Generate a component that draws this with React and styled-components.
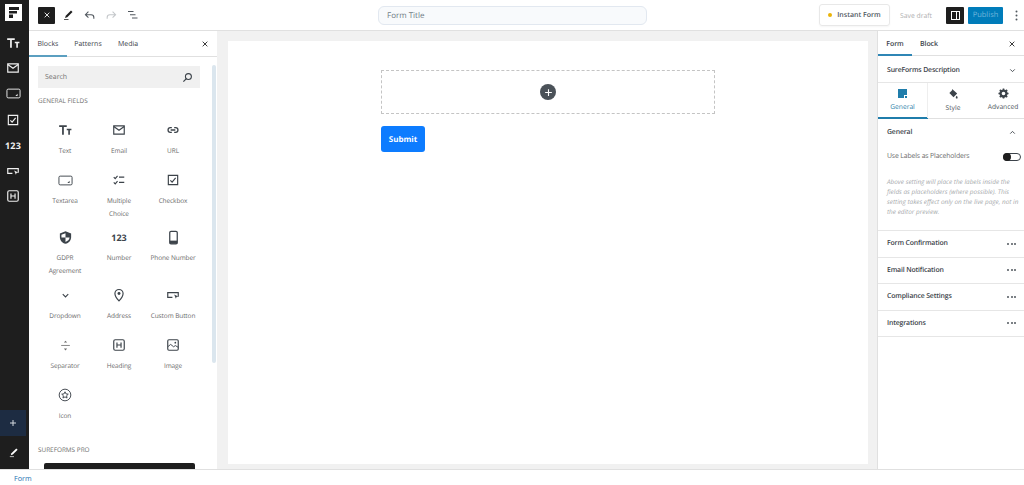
import React from 'react'
import styled, { createGlobalStyle } from 'styled-components'

const Global = createGlobalStyle`
  html, body { margin: 0; padding: 0; background: #fff; }
  body { font-family: "Open Sans", "Noto Sans", sans-serif; color: #1e1e1e; text-rendering: geometricPrecision; }
  * { box-sizing: border-box; }
`

const Page = styled.div`
  width: 1024px;
  height: 485px;
  display: flex;
  flex-direction: column;
  overflow: hidden;
`
const Main = styled.div`
  flex: 1;
  min-height: 0;
  display: flex;
`
const Rail = styled.nav`
  width: 29px;
  flex: none;
  background: #1e1e1e;
  display: flex;
  flex-direction: column;
  padding-right: 3px;
  color: #f0f0f0;
`
const Logo = styled.div`
  width: 17px;
  height: 17px;
  margin: 4px 0 0 4.5px;
  background: #fff;
  display: flex;
  align-items: center;
  justify-content: center;
`
const RailList = styled.div`
  display: flex;
  flex-direction: column;
  align-items: center;
  margin-top: 9px;
`
const RailItem = styled.div`
  height: 25.6px;
  display: flex;
  align-items: center;
  justify-content: center;
  font-size: 9px;
  font-weight: 700;
  letter-spacing: 0.2px;
`
const RailBottom = styled.div`
  margin-top: auto;
  display: flex;
  flex-direction: column;
`
const AddButton = styled.div`
  height: 26px;
  background: #1d2c42;
  display: flex;
  align-items: center;
  justify-content: center;
`
const PenButton = styled.div`
  height: 33px;
  display: flex;
  align-items: center;
  justify-content: center;
`
const Work = styled.div`
  flex: 1;
  min-width: 0;
  display: flex;
  flex-direction: column;
`
const TopBar = styled.header`
  height: 31px;
  flex: none;
  display: flex;
  align-items: center;
  border-bottom: 1px solid #e0e0e0;
  padding-left: 9px;
`
const CloseSquare = styled.div`
  width: 17px;
  height: 17px;
  background: #1e1e1e;
  border-radius: 1px;
  display: flex;
  align-items: center;
  justify-content: center;
`
const Tools = styled.div`
  display: flex;
  align-items: center;
  gap: 9px;
  margin-left: 7px;
  color: #1e1e1e;
`
const TitleField = styled.div`
  width: 269px;
  height: 19px;
  margin-left: 239px;
  padding-left: 8px;
  background: #f8fafc;
  border: 1px solid #e2e8f0;
  border-radius: 6px;
  display: flex;
  align-items: center;
  font-size: 8px;
  color: #6f7a85;
`
const TopActions = styled.div`
  margin-left: auto;
  display: flex;
  align-items: center;
`
const InstantButton = styled.div`
  width: 71px;
  height: 22px;
  margin-right: 10px;
  border: 1px solid #e8e8e8;
  border-radius: 3px;
  display: flex;
  align-items: center;
  justify-content: center;
  gap: 5px;
  font-size: 7px;
  font-weight: 600;
  color: #50575e;
  box-shadow: 0 1px 2px rgba(0, 0, 0, 0.04);
`
const Dot = styled.span`
  width: 4px;
  height: 4px;
  border-radius: 50%;
  background: #eab308;
`
const SaveDraft = styled.span`
  width: 31px;
  white-space: nowrap;
  font-size: 6.8px;
  color: #b0b0b0;
  margin-right: 15px;
`
const PanelToggle = styled.div`
  width: 18px;
  height: 17px;
  margin-right: 4px;
  background: #1e1e1e;
  border-radius: 1px;
  display: flex;
  align-items: center;
  justify-content: center;
`
const Publish = styled.div`
  width: 35px;
  height: 17px;
  background: #007cba;
  border-radius: 1px;
  display: flex;
  align-items: center;
  justify-content: center;
  font-size: 7.5px;
  color: #6fb5da;
`
const MoreDots = styled.div`
  width: 21px;
  padding-left: 5px;
  display: flex;
  justify-content: center;
  color: #50575e;
`
const Body = styled.div`
  flex: 1;
  min-height: 0;
  display: flex;
`
const Inserter = styled.aside`
  width: 188px;
  flex: none;
  background: #fff;
  position: relative;
  overflow: hidden;
`
const TabRow = styled.div`
  height: 26px;
  display: flex;
  align-items: center;
  border-bottom: 1px solid #e0e0e0;
`
const TextTab = styled.div`
  height: 100%;
  width: ${p => p.$w}px;
  padding-top: 2px;
  display: flex;
  align-items: center;
  justify-content: center;
  font-size: 7px;
  font-weight: 500;
  color: #3c434a;
  box-shadow: ${p => (p.$active ? 'inset 0 -1px 0 #5b9fc0, 0 1px 0 #5b9fc0' : 'none')};
`
const TabClose = styled.div`
  margin-left: auto;
  margin-right: 8px;
  display: flex;
`
const SearchBox = styled.div`
  margin: 9px 0 0 9px;
  width: 162px;
  height: 22px;
  background: #f0f0f0;
  display: flex;
  align-items: center;
  justify-content: space-between;
  padding: 0 7px;
  font-size: 7px;
  color: #757575;
`
const SectionTitle = styled.div`
  margin: ${p => p.$top}px 0 0 9px;
  height: 10px;
  line-height: 10px;
  font-size: 6.4px;
  color: #6d6d6d;
`
const BlockGrid = styled.div`
  margin: 16px 0 0 9px;
  width: 162px;
  display: grid;
  grid-template-columns: repeat(3, 54px);
`
const BlockItem = styled.div`
  min-height: 50px;
  padding-bottom: 10px;
  display: flex;
  flex-direction: column;
  align-items: center;
  text-align: center;
`
const BlockIcon = styled.div`
  height: 16px;
  display: flex;
  align-items: center;
  justify-content: center;
  font-size: 9px;
  font-weight: 700;
  color: #3c434a;
`
const BlockLabel = styled.div`
  margin-top: 5.5px;
  font-size: 6.5px;
  letter-spacing: -0.1px;
  line-height: 13px;
  color: #6b6b6b;
  white-space: pre-line;
`
const ProCard = styled.div`
  margin: 8px 0 0 15px;
  width: 151px;
  height: 30px;
  background: #1e1e1e;
  border-radius: 2px;
`
const ScrollThumb = styled.div`
  position: absolute;
  right: 1px;
  top: 34px;
  width: 4px;
  height: 298px;
  background: #dbe6ee;
  border-radius: 2px;
`
const Canvas = styled.main`
  flex: 1;
  min-width: 0;
  background: #f1f1f1;
  padding: 10px 9px 5px 11px;
  display: flex;
`
const Sheet = styled.div`
  flex: 1;
  background: #fff;
  padding: 29px 153px 0;
`
const DropZone = styled.div`
  height: 44px;
  border: 1px dashed #c4c4c4;
  display: flex;
  align-items: center;
  justify-content: center;
`
const AddCircle = styled.div`
  width: 16px;
  height: 16px;
  border-radius: 50%;
  background: #4b5259;
  display: flex;
  align-items: center;
  justify-content: center;
`
const Submit = styled.div`
  margin-top: 12px;
  width: 44px;
  height: 26px;
  background: #0d7cff;
  border-radius: 3px;
  display: flex;
  align-items: center;
  justify-content: center;
  color: #fff;
  font-size: 8px;
  font-weight: 700;
`
const Settings = styled.aside`
  width: 147px;
  flex: none;
  background: #fff;
  border-left: 1px solid #e0e0e0;
`
const SettingsTabs = styled.div`
  height: 25px;
  padding-top: 2px;
  display: flex;
  align-items: center;
  border-bottom: 1px solid #e0e0e0;
`
const SettingsTab = styled.div`
  width: ${p => p.$w}px;
  height: calc(100% + 2px);
  margin-top: -2px;
  padding-top: 2px;
  display: flex;
  align-items: center;
  justify-content: center;
  font-size: 7px;
  font-weight: 600;
  letter-spacing: -0.1px;
  color: #3c434a;
  box-shadow: ${p => (p.$active ? 'inset 0 -1px 0 #2f86b5, 0 1px 0 #2f86b5' : 'none')};
`
const Row = styled.div`
  height: ${p => p.$h}px;
  padding: ${p => p.$pt || 0}px 7px 0 9px;
  display: flex;
  align-items: center;
  justify-content: space-between;
  font-size: 6.9px;
  letter-spacing: -0.15px;
  font-weight: 600;
  color: #3c434a;
  border-bottom: ${p => (p.$flat ? 'none' : '1px solid #e6e6e6')};
`
const StyleTabs = styled.div`
  height: 36px;
  display: flex;
  border-bottom: 1px solid #e0e0e0;
`
const StyleTab = styled.div`
  width: 50px;
  flex: none;
  display: flex;
  flex-direction: column;
  align-items: center;
  padding-top: 5px;
  font-size: 6.7px;
  line-height: 10px;
  color: ${p => (p.$active ? '#2c7fa8' : '#50575e')};
  border-right: ${p => (p.$active ? '1px solid #eee' : 'none')};
  box-shadow: ${p => (p.$active ? 'inset 0 -1px 0 #1f7dab, 0 1px 0 #1f7dab' : 'none')};
`
const StyleLabel = styled.span`
  margin-top: ${p => p.$top}px;
`
const ToggleRow = styled.div`
  height: 17px;
  margin-top: 3px;
  padding: 0 3px 0 9px;
  display: flex;
  align-items: center;
  justify-content: space-between;
  font-size: 6.9px;
  letter-spacing: -0.15px;
  color: #6b6b6b;
`
const Toggle = styled.div`
  width: 18px;
  height: 8px;
  border: 1px solid #3c434a;
  border-radius: 4px;
  position: relative;
  &::before {
    content: '';
    position: absolute;
    left: -1px;
    top: -1px;
    width: 8px;
    height: 8px;
    border-radius: 50%;
    background: #1e1e1e;
  }
`
const HelpText = styled.p`
  margin: 12px 0 0;
  padding: 0 2px 0 9px;
  height: 53px;
  font-size: 6.4px;
  line-height: 10px;
  font-style: italic;
  color: #a7aaad;
`
const Dots = styled.div`
  display: flex;
  gap: 1.5px;
  margin-right: 1px;
  span {
    width: 2px;
    height: 2px;
    border-radius: 50%;
    background: #50575e;
  }
`
const Footer = styled.footer`
  height: 16px;
  flex: none;
  border-top: 1px solid #e0e0e0;
  padding: 3px 0 0 14px;
  display: flex;
  align-items: center;
  font-size: 7.2px;
  color: #2271b1;
`

const Ico = ({ s = 13, c = 'currentColor', children }) => (
  <svg width={s} height={s} viewBox="0 0 24 24" fill={c} style={{ display: 'block', color: c }}>{children}</svg>
)
const Line = ({ d, w = 2 }) => <path d={d} fill="none" stroke="currentColor" strokeWidth={w} />

const TextIcon = ({ c }) => <Ico c={c} s={14}><path d="M2 4h13v3H10v13H7V7H2zM15 10h8v2.500h-2.600V20h-2.800v-7.500H15z" /></Ico>
const MailIcon = ({ c }) => <Ico c={c} s={14}><Line d="M3 5h18v14H3z" /><Line d="M3 6l9 6.500L21 6" w={2} /></Ico>
const TextareaIcon = ({ c }) => <Ico c={c} s={15}><rect x="1.500" y="5" width="21" height="14" rx="2" fill="none" stroke="currentColor" strokeWidth="1.500" /><path d="M18.500 12.500v3.500H15z" /></Ico>
const CheckboxIcon = ({ c }) => <Ico c={c} s={14}><Line d="M4 4h16v16H4z" /><Line d="M7.500 12.500l3 3 6-7" /></Ico>
const ButtonIcon = ({ c }) => <Ico c={c} s={14}><path d="M2 7h20v8h-2V9H4v6h7v2H2z" /><path d="M14 11l7 3.500-3 1-1 3z" /></Ico>
const HeadingIcon = ({ c }) => <Ico c={c} s={14}><rect x="3" y="3" width="18" height="18" rx="2.500" fill="none" stroke="currentColor" strokeWidth="2" /><Line d="M8.500 7.500v9M15.500 7.500v9M8.500 12h7" /></Ico>
const LinkIcon = ({ c }) => <Ico c={c} s={14}><Line d="M10 8H7.500a4 4 0 0 0 0 8H10M14 8h2.500a4 4 0 0 1 0 8H14M8 12h8" w={2.200} /></Ico>
const ChoiceIcon = ({ c }) => <Ico c={c} s={14}><Line d="M3 7l2.500 2.500L9.500 5M3 16l2.500 2.500L9.500 14M12 7h9M12 16h9" /></Ico>
const ShieldIcon = ({ c }) => <Ico c={c} s={15}><path d="M12 2l9 3.500V11c0 5.500-3.800 9.500-9 11-5.200-1.500-9-5.500-9-11V5.500z" /><path d="M12 5v7h6.500c-.3 3.300-2.700 5.600-6.500 7v-7H5.500V7.500z" fill="#fff" /></Ico>
const PhoneIcon = ({ c }) => <Ico c={c} s={15}><rect x="6" y="2" width="12" height="20" rx="2" fill="none" stroke="currentColor" strokeWidth="2" /><path d="M6 17h12v5H6z" /></Ico>
const ChevronDown = ({ c, s = 12 }) => <Ico c={c} s={s}><Line d="M6 9l6 6 6-6" w={2.400} /></Ico>
const ChevronUp = ({ c, s = 12 }) => <Ico c={c} s={s}><Line d="M6 15l6-6 6 6" w={2.400} /></Ico>
const PinIcon = ({ c }) => <Ico c={c} s={14}><Line d="M12 22s-7-7-7-12.500a7 7 0 0 1 14 0C19 15 12 22 12 22z" /><circle cx="12" cy="9.500" r="2.500" /></Ico>
const SeparatorIcon = ({ c }) => <Ico c={c} s={13}><path d="M4 11h16v1.500H4z" /><path d="M12 3l3 3.500H9zM12 21l-3-3.500h6z" /></Ico>
const ImageIcon = ({ c }) => <Ico c={c} s={14}><rect x="3" y="3" width="18" height="18" rx="2" fill="none" stroke="currentColor" strokeWidth="2" /><Line d="M3 15l5-4 5 4 3-2 5 3" w={1.600} /><circle cx="16" cy="8" r="1.500" /></Ico>
const StarCircleIcon = ({ c }) => <Ico c={c} s={14}><circle cx="12" cy="12" r="10" fill="none" stroke="currentColor" strokeWidth="1.600" /><path d="M12 6.500l1.700 3.600 3.900.5-2.900 2.700.8 3.900-3.500-2-3.500 2 .8-3.900-2.900-2.700 3.900-.5z" fill="none" stroke="currentColor" strokeWidth="1.600" /></Ico>
const XIcon = ({ c, s = 11 }) => <Ico c={c} s={s}><Line d="M5 5l14 14M19 5L5 19" w={2.600} /></Ico>
const PlusIcon = ({ c, s = 10 }) => <Ico c={c} s={s}><Line d="M12 3v18M3 12h18" w={3} /></Ico>
const PenIcon = ({ c, s = 13 }) => <Ico c={c} s={s}><path d="M18 3l3 3L10.500 16.500 6 18l1.500-4.500z" /><path d="M4 20.500h9V22H4z" /></Ico>
const UndoIcon = ({ c }) => <Ico c={c} s={13}><Line d="M20 18v-2.500a5 5 0 0 0-5-5H5M10 5l-5.500 5.500L10 16" /></Ico>
const RedoIcon = ({ c }) => <Ico c={c} s={13}><Line d="M4 18v-2.500a5 5 0 0 1 5-5h10M14 5l5.500 5.500L14 16" /></Ico>
const ListIcon = ({ c }) => <Ico c={c} s={12}><Line d="M2 5h11M6 11.500h11M10 18h11" /></Ico>
const SearchIcon = ({ c }) => <Ico c={c} s={11}><circle cx="14" cy="10" r="6.500" fill="none" stroke="currentColor" strokeWidth="2.400" /><Line d="M9.500 14.500L3 21" w={2.800} /></Ico>

const fields = [
  ['Text', <TextIcon />], ['Email', <MailIcon />], ['URL', <LinkIcon />],
  ['Textarea', <TextareaIcon />], ['Multiple\nChoice', <ChoiceIcon />], ['Checkbox', <CheckboxIcon />],
  ['GDPR\nAgreement', <ShieldIcon />], ['Number', '123'], ['Phone Number', <PhoneIcon />],
  ['Dropdown', <ChevronDown s={11} />], ['Address', <PinIcon />], ['Custom Button', <ButtonIcon />],
  ['Separator', <SeparatorIcon c="#6b6b6b" />], ['Heading', <HeadingIcon />], ['Image', <ImageIcon />],
  ['Icon', <StarCircleIcon />],
]

const railIcons = [<TextIcon />, <MailIcon />, <TextareaIcon />, <CheckboxIcon />, '123', <ButtonIcon />, <HeadingIcon />]

const collapsed = ['Form Confirmation', 'Email Notification', 'Compliance Settings', 'Integrations']

export default function App() {
  return (
    <Page>
      <Global />
      <Main>
        <Rail>
          <Logo>
            <svg width="13" height="13" viewBox="0 0 13 13" fill="#1e1e1e">
              <path d="M2 1h10v3H2zM2 5h8v2.500H2zM2 8.500h4V12H2z" />
            </svg>
          </Logo>
          <RailList>
            {railIcons.map((icon, i) => <RailItem key={i}>{icon}</RailItem>)}
          </RailList>
          <RailBottom>
            <AddButton><PlusIcon c="#d5d9de" s={8} /></AddButton>
            <PenButton><PenIcon c="#fff" s={11} /></PenButton>
          </RailBottom>
        </Rail>
        <Work>
          <TopBar>
            <CloseSquare><XIcon c="#fff" s={8} /></CloseSquare>
            <Tools>
              <PenIcon c="#1e1e1e" s={12} />
              <UndoIcon c="#50575e" />
              <RedoIcon c="#c4c7ca" />
              <ListIcon c="#50575e" />
            </Tools>
            <TitleField>Form Title</TitleField>
            <TopActions>
              <InstantButton><Dot />Instant Form</InstantButton>
              <SaveDraft>Save draft</SaveDraft>
              <PanelToggle>
                <svg width="11" height="11" viewBox="0 0 11 11" fill="none" stroke="#fff" strokeWidth="1">
                  <rect x="1.500" y="1.500" width="8" height="8" />
                  <path d="M6.500 1.500v8" />
                </svg>
              </PanelToggle>
              <Publish>Publish</Publish>
              <MoreDots>
                <svg width="3" height="11" viewBox="0 0 3 11" fill="currentColor">
                  <circle cx="1.500" cy="1.500" r="1" /><circle cx="1.500" cy="5.500" r="1" /><circle cx="1.500" cy="9.500" r="1" />
                </svg>
              </MoreDots>
            </TopActions>
          </TopBar>
          <Body>
            <Inserter>
              <TabRow>
                <TextTab $w={38} $active>Blocks</TextTab>
                <TextTab $w={42}>Patterns</TextTab>
                <TextTab $w={38}>Media</TextTab>
                <TabClose><XIcon c="#1e1e1e" s={8} /></TabClose>
              </TabRow>
              <SearchBox>Search<SearchIcon c="#3c434a" /></SearchBox>
              <SectionTitle $top={8}>GENERAL FIELDS</SectionTitle>
              <BlockGrid>
                {fields.map(([label, icon]) => (
                  <BlockItem key={label}>
                    <BlockIcon>{icon}</BlockIcon>
                    <BlockLabel>{label}</BlockLabel>
                  </BlockItem>
                ))}
              </BlockGrid>
              <SectionTitle $top={8}>SUREFORMS PRO</SectionTitle>
              <ProCard />
              <ScrollThumb />
            </Inserter>
            <Canvas>
              <Sheet>
                <DropZone><AddCircle><PlusIcon c="#fff" s={9} /></AddCircle></DropZone>
                <Submit>Submit</Submit>
              </Sheet>
            </Canvas>
            <Settings>
              <SettingsTabs>
                <SettingsTab $w={34} $active>Form</SettingsTab>
                <SettingsTab $w={34}>Block</SettingsTab>
                <TabClose><XIcon c="#1e1e1e" s={8} /></TabClose>
              </SettingsTabs>
              <Row $h={27} $pt={2}>SureForms Description<ChevronDown c="#3c434a" s={9} /></Row>
              <StyleTabs>
                <StyleTab $active>
                  <svg width="11" height="11" viewBox="0 0 11 11">
                    <path d="M1 1h9v6H7v3H1z" fill="#1f7dab" />
                    <path d="M8 8h2v2H8z" fill="#1f7dab" />
                  </svg>
                  <StyleLabel $top={3}>General</StyleLabel>
                </StyleTab>
                <StyleTab>
                  <svg width="11" height="12" viewBox="0 0 24 24" fill="#3c434a">
                    <path d="M9 1l11 10-8 8-9-9 6-6zM19 16c1.500 2 2 3 2 4a2 2 0 0 1-4 0c0-1 .5-2 2-4z" />
                  </svg>
                  <StyleLabel $top={3}>Style</StyleLabel>
                </StyleTab>
                <StyleTab>
                  <svg width="11" height="11" viewBox="0 0 24 24" fill="none" stroke="#3c434a">
                    <circle cx="12" cy="12" r="6.500" strokeWidth="5" />
                    <path d="M12 1v4M12 19v4M1 12h4M19 12h4M4 4l3 3M17 17l3 3M20 4l-3 3M7 17l-3 3" strokeWidth="3.500" />
                  </svg>
                  <StyleLabel $top={3}>Advanced</StyleLabel>
                </StyleTab>
              </StyleTabs>
              <Row $h={26} $flat>General<ChevronUp c="#3c434a" s={9} /></Row>
              <ToggleRow>Use Labels as Placeholders<Toggle /></ToggleRow>
              <HelpText>
                Above setting will place the labels inside the fields as placeholders (where possible). This setting takes effect only on the live page, not in the editor preview.
              </HelpText>
              <Row $h={1} />
              {collapsed.map(title => (
                <Row key={title} $h={26.500}>{title}<Dots><span /><span /><span /></Dots></Row>
              ))}
            </Settings>
          </Body>
        </Work>
      </Main>
      <Footer>Form</Footer>
    </Page>
  )
}
